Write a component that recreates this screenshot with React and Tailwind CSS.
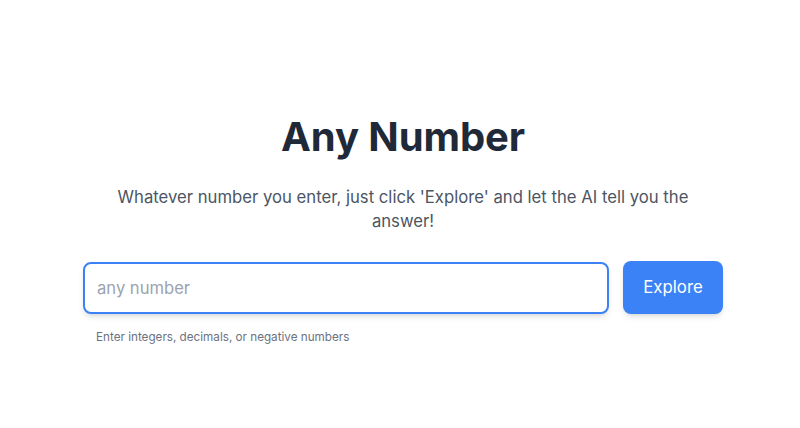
export default function App() {
    return (
        <div className="min-h-[428px] w-full bg-white pt-[113px] pl-[6px] font-['Inter','Liberation_Sans',sans-serif]">
            <div className="mx-auto flex w-[640px] flex-col items-center">
                <h1 className="text-[40px] leading-[48px] font-bold text-[#1f2937] tracking-[-0.1px]">Any Number</h1>
                <p className="mt-6 max-w-xl text-center text-[16.7px] leading-6 text-[#4b5563]">
                    Whatever number you enter, just click 'Explore' and let the AI tell you the answer!
                </p>
                <div className="mt-7 w-full">
                    <div className="flex items-center gap-[14px]">
                        <input
                            type="text"
                            placeholder="any number"
                            className="h-[52px] flex-1 rounded-lg border-2 border-[#3b82f6] bg-white px-[12px] text-[16.6px] text-[#1f2937] placeholder:text-[#9ca3af] shadow-md outline-none"
                        />
                        <button className="h-[53px] w-[100px] rounded-lg bg-[#3b82f6] text-[16.8px] text-white shadow-md">
                            Explore
                        </button>
                    </div>
                    <p className="mt-[15px] pl-[13px] text-[11.7px] leading-4 text-[#6b7280]">
                        Enter integers, decimals, or negative numbers
                    </p>
                </div>
            </div>
        </div>
    )
}
